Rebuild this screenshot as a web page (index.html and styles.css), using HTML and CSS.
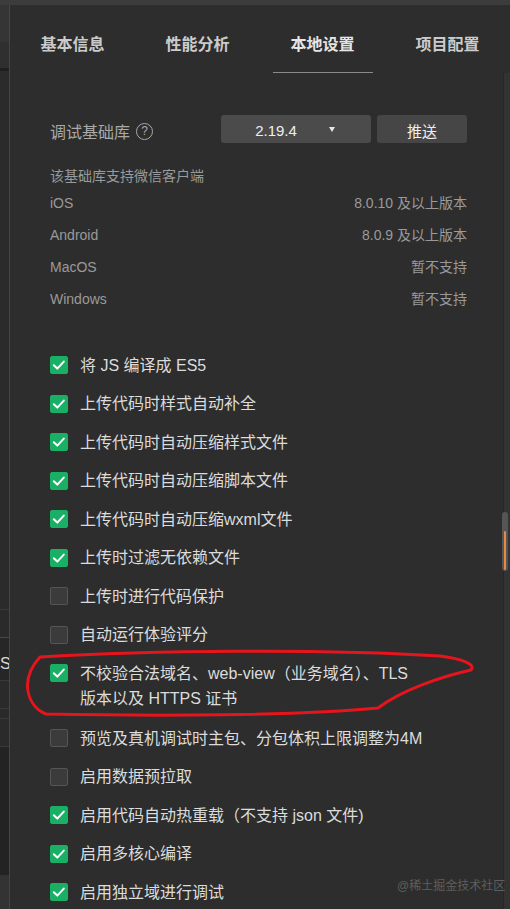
FILE: index.html
```html
<!DOCTYPE html>
<html lang="zh-CN">
<head>
    <meta charset="UTF-8">
    <meta name="viewport" content="width=device-width, initial-scale=1.0">
    <title>本地设置</title>
    <link rel="stylesheet" href="styles.css">
</head>
<body>
    <div class="topbar"></div>
    <div class="main">
        <aside class="side">
            <div class="side-head"></div>
            <div class="side-sub"></div>
            <div class="side-rule"></div>
            <div class="side-fill"></div>
            <div class="side-cell"></div>
            <div class="side-cell tall"><span>S</span></div>
            <div class="side-cell"></div>
            <div class="side-cell short"></div>
            <div class="side-cell"></div>
            <div class="side-dark"></div>
            <div class="side-foot"></div>
        </aside>

        <section class="panel">
            <nav class="tabs">
                <div class="tab"><span>基本信息</span></div>
                <div class="tab"><span>性能分析</span></div>
                <div class="tab active"><span>本地设置</span></div>
                <div class="tab"><span>项目配置</span></div>
            </nav>

            <div class="panel-body">
                <div class="content">
                    <div class="lib-row">
                        <div class="lib-label">调试基础库 <span class="help">?</span></div>
                        <div class="lib-controls">
                            <div class="select">2.19.4 <i class="caret"></i></div>
                            <button type="button" class="push">推送</button>
                        </div>
                    </div>

                    <div class="support-title">该基础库支持微信客户端</div>
                    <div class="support-row"><span>iOS</span><span>8.0.10 及以上版本</span></div>
                    <div class="support-row"><span>Android</span><span>8.0.9 及以上版本</span></div>
                    <div class="support-row"><span>MacOS</span><span>暂不支持</span></div>
                    <div class="support-row"><span>Windows</span><span>暂不支持</span></div>

                    <ul class="options">
                        <li class="option checked"><span class="box"></span><span>将 JS 编译成 ES5</span></li>
                        <li class="option checked"><span class="box"></span><span>上传代码时样式自动补全</span></li>
                        <li class="option checked"><span class="box"></span><span>上传代码时自动压缩样式文件</span></li>
                        <li class="option checked"><span class="box"></span><span>上传代码时自动压缩脚本文件</span></li>
                        <li class="option checked"><span class="box"></span><span>上传代码时自动压缩wxml文件</span></li>
                        <li class="option checked"><span class="box"></span><span>上传时过滤无依赖文件</span></li>
                        <li class="option"><span class="box"></span><span>上传时进行代码保护</span></li>
                        <li class="option"><span class="box"></span><span>自动运行体验评分</span></li>
                        <li class="option checked multi"><span class="box"></span><span>不校验合法域名、web-view（业务域名）、TLS<br>版本以及 HTTPS 证书</span></li>
                        <li class="option"><span class="box"></span><span>预览及真机调试时主包、分包体积上限调整为4M</span></li>
                        <li class="option"><span class="box"></span><span>启用数据预拉取</span></li>
                        <li class="option checked"><span class="box"></span><span>启用代码自动热重载（不支持 json 文件)</span></li>
                        <li class="option checked"><span class="box"></span><span>启用多核心编译</span></li>
                        <li class="option checked"><span class="box"></span><span>启用独立域进行调试</span></li>
                    </ul>
                </div>

                <div class="scrollbar">
                    <div class="thumb"><div class="thumb-mark"></div></div>
                </div>
            </div>
        </section>
    </div>

    <!-- hand-drawn red circle from the screenshot -->
    <svg class="annotation" width="510" height="909" viewBox="0 0 510 909">
        <path d="M40 657 C150 650 330 649 440 656 C462 659 476 664 471 670 C440 677 402 690 378 708 C300 716 150 716 46 714 C27 706 19 680 40 657"
              fill="none" stroke="#e6141c" stroke-width="3" stroke-linecap="round"/>
    </svg>

    <div class="watermark">@稀土掘金技术社区</div>
</body>
</html>
```

FILE: styles.css
```css
* {
    box-sizing: border-box;
}

body {
    margin: 0;
    width: 510px;
    height: 909px;
    overflow: hidden;
    background-color: #2d2d2d;
    font-family: 'Liberation Sans', 'Noto Sans CJK SC', sans-serif;
    color: #dcdcdc;
    position: relative;
}

.topbar {
    height: 5px;
    background-color: #3c3c3c;
}

.main {
    display: flex;
    height: 904px;
}

/* sliver of the neighbouring pane on the left */
.side {
    width: 10px;
    display: flex;
    flex-direction: column;
    background-color: #2b2b2b;
    border-right: 1px solid #454545;
    overflow: hidden;
}

.side-head { height: 37px; background-color: #353535; }
.side-sub { height: 26px; background-color: #2f2f2f; }
.side-rule { height: 3px; background-color: #1f1f1f; }
.side-fill { height: 538px; }

.side-cell {
    height: 28px;
    border-top: 1px solid #3a3a3a;
    background-color: #2a2a2a;
}

.side-cell.tall {
    height: 43px;
    background-color: #262626;
    border-top-color: #474747;
    font-size: 16px;
    line-height: 52px;
    color: #d8d8d8;
}

.side-cell.tall span {
    display: block;
}

.side-cell.short { height: 10px; }

.side-dark {
    height: 129px;
    border-top: 1px solid #3a3a3a;
    background-color: #232323;
}

.side-foot {
    flex: 1;
    background-color: #333;
}

.panel {
    flex: 1;
    display: flex;
    flex-direction: column;
}

/* tabs */
.tabs {
    display: grid;
    grid-template-columns: repeat(4, 1fr);
    height: 69px;
}

.tab {
    padding-top: 28px;
    font-size: 16px;
    font-weight: bold;
    color: #cbcbcb;
}

.tab span {
    display: block;
    width: 100px;
    margin: 0 auto;
    text-align: center;
    line-height: 24px;
    padding-bottom: 15px;
    border-bottom: 1px solid transparent;
}

.tab.active {
    color: #e4e4e4;
}

.tab.active span {
    border-bottom-color: #8a8a8a;
}

.panel-body {
    flex: 1;
    display: flex;
}

.content {
    flex: 1;
    padding: 42px 36px 0 40px;
}

/* base library row */
.lib-row {
    display: flex;
    justify-content: space-between;
    align-items: center;
    height: 28px;
}

.lib-label {
    display: flex;
    align-items: center;
    padding-top: 4px;
    font-size: 16px;
    color: #a9a9a9;
}

.help {
    display: inline-block;
    width: 17px;
    height: 17px;
    margin-left: 6px;
    border: 1.3px solid #a9a9a9;
    border-radius: 50%;
    font-size: 12px;
    line-height: 15px;
    text-align: center;
}

.lib-controls {
    display: flex;
    gap: 6px;
}

.select {
    position: relative;
    width: 150px;
    height: 28px;
    padding-right: 40px;
    background-color: #4b4b4b;
    border-radius: 3px;
    font-size: 15px;
    line-height: 31px;
    text-align: center;
    color: #eee;
}

.caret {
    position: absolute;
    right: 36px;
    top: 12px;
    border-left: 3.5px solid transparent;
    border-right: 3.5px solid transparent;
    border-top: 5px solid #e6e6e6;
}

.push {
    width: 90px;
    height: 28px;
    border: none;
    border-radius: 3px;
    background-color: #464646;
    color: #eee;
    font-family: inherit;
    font-size: 15px;
    padding: 3px 0 0;
}

/* supported clients */
.support-title {
    margin-top: 22px;
    font-size: 14px;
    line-height: 22px;
    color: #9a9a9a;
}

.support-row {
    display: flex;
    justify-content: space-between;
    font-size: 14px;
    line-height: 32px;
    color: #9a9a9a;
}

/* option checkboxes */
.options {
    list-style: none;
    margin: 37.5px 0 0;
    padding: 0;
}

.option {
    display: flex;
    align-items: flex-start;
    font-size: 16px;
    line-height: 25px;
    margin-bottom: 13.5px;
    color: #dcdcdc;
    white-space: nowrap;
}

.option.multi {
    margin-bottom: 15px;
}

.box {
    flex: none;
    width: 18px;
    height: 18px;
    margin: 3.5px 12px 0 0;
    border: 1px solid #555;
    border-radius: 2px;
    background-color: #3b3b3b;
}

.option.checked .box {
    border-color: #19b065;
    background-color: #19b065;
    background-image: url("data:image/svg+xml,%3Csvg xmlns='http://www.w3.org/2000/svg' width='18' height='18' viewBox='0 0 18 18'%3E%3Cpath d='M3.8 9.3 L7.3 12.6 L13.8 5.6' fill='none' stroke='white' stroke-width='2' stroke-linecap='round' stroke-linejoin='round'/%3E%3C/svg%3E");
    background-position: center;
    background-repeat: no-repeat;
}

/* scrollbar */
.scrollbar {
    width: 7px;
    border-left: 1px solid #262626;
    background-color: #333;
}

.thumb {
    width: 6px;
    height: 59px;
    margin: 439px 0 0 -2px;
    padding: 19px 2px 1px;
    border-radius: 3px;
    background-color: #555;
}

.thumb-mark {
    height: 100%;
    border-radius: 2px;
    background-color: #e88a40;
}

.annotation {
    position: absolute;
    left: 0;
    top: 0;
    pointer-events: none;
}

.watermark {
    position: absolute;
    left: 397px;
    top: 877px;
    font-size: 12px;
    line-height: 18px;
    color: #5e5e5e;
}
```
